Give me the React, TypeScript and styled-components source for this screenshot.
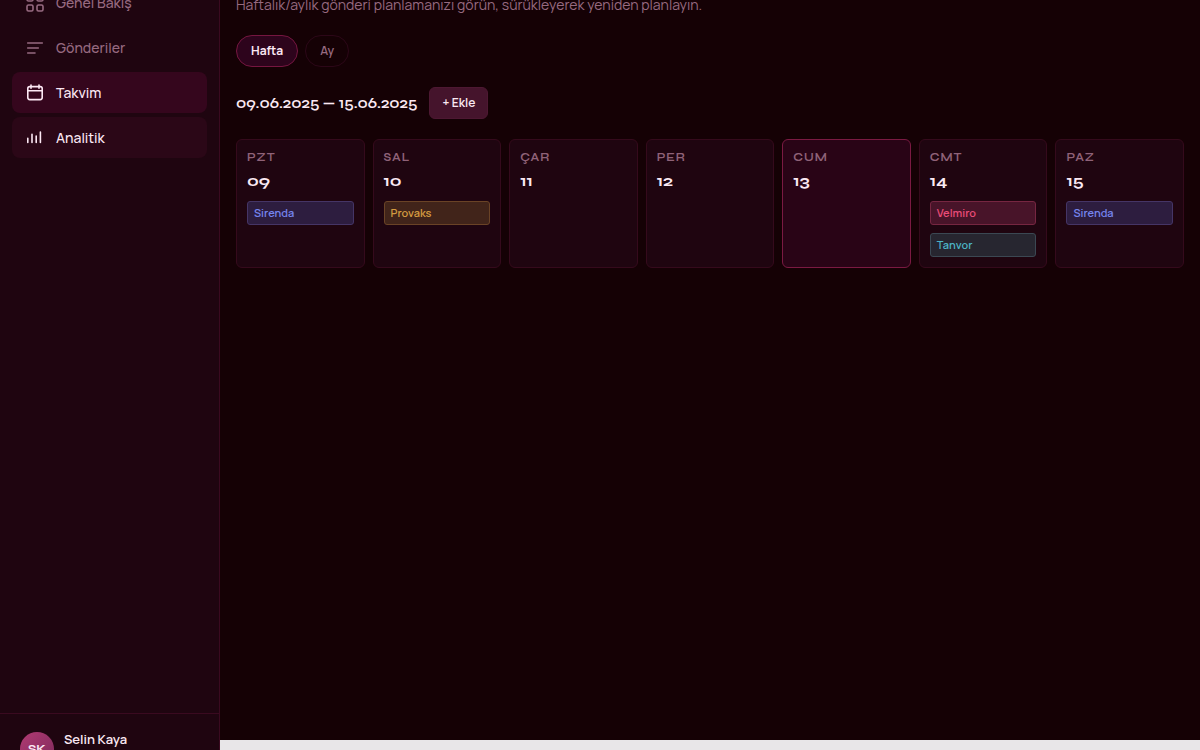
import React from "react";
import styled, { createGlobalStyle, css } from "styled-components";

const GlobalStyle = createGlobalStyle`
  *, *::before, *::after { box-sizing: border-box; }
  html, body { margin: 0; height: 100%; overflow: hidden; background: #e8e6e8; }
  body { font-family: Manrope, Inter, sans-serif; font-size: 14px; line-height: 20px; color: #fbe9f3; }
  button, a { font: inherit; color: inherit; }
`;

const display = css`font-family: Syne, "DejaVu Sans", sans-serif;`;

const Shell = styled.div`
  display: flex;
  height: 100vh;
  overflow: hidden;
`;

const Sidebar = styled.aside`
  display: flex;
  flex-direction: column;
  flex: 0 0 220px;
  background: #1f0510;
  border-right: 1px solid #3a0a20;
`;

const Nav = styled.nav`
  display: flex;
  flex-direction: column;
  flex: 1;
  gap: 4px;
  margin-top: -18px;
  padding: 0 12px;
`;

const NavLink = styled.a<{ $state?: "active" | "hover" }>`
  display: flex;
  flex-shrink: 0;
  align-items: center;
  gap: 12px;
  height: 41px;
  padding: 0 14px;
  border-radius: 8px;
  text-decoration: none;
  font-weight: 500;
  color: ${(p) => (p.$state ? "#fce8f4" : "#976a80")};
  background: ${(p) => (p.$state === "active" ? "#35061d" : p.$state === "hover" ? "#2b0717" : "transparent")};
`;

const NavIcon = styled.svg`
  width: 18px;
  height: 18px;
  flex-shrink: 0;
  fill: none;
  stroke: currentColor;
  stroke-width: 1.6;
  stroke-linecap: round;
  stroke-linejoin: round;
`;

const Account = styled.footer`
  display: flex;
  gap: 10px;
  height: 37px;
  flex-shrink: 0;
  padding: 18px 20px 0;
  border-top: 1px solid #3a0a20;
  overflow: hidden;
`;

const Avatar = styled.span`
  ${display}
  display: grid;
  place-items: center;
  flex-shrink: 0;
  width: 34px;
  height: 34px;
  border-radius: 50%;
  background: linear-gradient(135deg, #b03a72, #7d2a5c);
  font-size: 12px;
  font-weight: 700;
`;

const AccountName = styled.span`
  line-height: 14px;
  font-size: 13px;
  font-weight: 600;
`;

const Main = styled.main`
  display: flex;
  flex-direction: column;
  flex: 1;
  min-width: 0;
  margin-bottom: 10px;
  padding: 0 16px;
  background: #150105;
`;

const Intro = styled.p`
  margin: -5px 0 20px;
  font-weight: 400;
  color: #976a80;
`;

const Tabs = styled.div`
  display: flex;
  gap: 7px;
  margin-bottom: 20px;
`;

const Tab = styled.button<{ $active?: boolean }>`
  height: 32px;
  padding: 0 14px;
  border: 1px solid ${(p) => (p.$active ? "#751640" : "#2c0718")};
  border-radius: 16px;
  background: ${(p) => (p.$active ? "#2d041c" : "transparent")};
  color: ${(p) => (p.$active ? "#fce8f4" : "#976a80")};
  font-size: 12px;
  font-weight: ${(p) => (p.$active ? 700 : 600)};
`;

const WeekBar = styled.div`
  display: flex;
  align-items: center;
  gap: 12px;
  margin-bottom: 20px;
`;

const WeekRange = styled.h2`
  ${display}
  margin: 0;
  font-size: 15px;
  font-weight: 600;
`;

const AddButton = styled.button`
  height: 32px;
  padding: 0 12px;
  border: 1px solid #4d1832;
  border-radius: 6px;
  background: #45142c;
  font-size: 12px;
  font-weight: 600;
`;

const Week = styled.section`
  display: grid;
  grid-template-columns: repeat(7, minmax(0, 1fr));
  gap: 8px;
`;

const Day = styled.article<{ $today?: boolean }>`
  display: flex;
  flex-direction: column;
  min-height: 129px;
  padding: 10px;
  border: 1px solid ${(p) => (p.$today ? "#7a1a42" : "#350a1c")};
  border-radius: 6px;
  background: ${(p) => (p.$today ? "#290416" : "#1f0510")};
`;

const DayName = styled.span`
  ${display}
  font-size: 11px;
  font-weight: 700;
  line-height: 16px;
  letter-spacing: 1px;
  color: #8f6278;
`;

const DayNumber = styled.strong`
  ${display}
  margin: 5px 0 10px;
  font-size: 16px;
  line-height: 20px;
`;

const Posts = styled.div`
  display: flex;
  flex-direction: column;
  gap: 8px;
`;

const tones = {
  blue: { text: "#7584ed", fill: "#2d1d3f", line: "#453566" },
  amber: { text: "#d39a40", fill: "#41241a", line: "#6a4326" },
  rose: { text: "#e94c78", fill: "#481429", line: "#762641" },
  teal: { text: "#4cb3c4", fill: "#272630", line: "#3b4853" },
};

const Post = styled.div<{ $tone: keyof typeof tones }>`
  height: 24px;
  padding: 0 6px;
  border: 1px solid ${(p) => tones[p.$tone].line};
  border-radius: 3px;
  background: ${(p) => tones[p.$tone].fill};
  color: ${(p) => tones[p.$tone].text};
  font-size: 11px;
  font-weight: 600;
  line-height: 22px;
`;

type Entry = { name: string; tone: keyof typeof tones };

const days: { name: string; date: string; today?: boolean; posts: Entry[] }[] = [
  { name: "PZT", date: "09", posts: [{ name: "Sirenda", tone: "blue" }] },
  { name: "SAL", date: "10", posts: [{ name: "Provaks", tone: "amber" }] },
  { name: "ÇAR", date: "11", posts: [] },
  { name: "PER", date: "12", posts: [] },
  { name: "CUM", date: "13", today: true, posts: [] },
  { name: "CMT", date: "14", posts: [{ name: "Velmiro", tone: "rose" }, { name: "Tanvor", tone: "teal" }] },
  { name: "PAZ", date: "15", posts: [{ name: "Sirenda", tone: "blue" }] },
];

export default function App() {
  return (
    <>
      <GlobalStyle />
      <Shell>
        <Sidebar>
          <Nav>
            <NavLink href="#genel">
              <NavIcon viewBox="0 0 18 18" aria-hidden="true">
                <rect x="1" y="1" width="6" height="6" rx="1.5" />
                <rect x="11" y="1" width="6" height="6" rx="1.5" />
                <rect x="1" y="11" width="6" height="6" rx="1.5" />
                <rect x="11" y="11" width="6" height="6" rx="1.5" />
              </NavIcon>
              Genel Bakış
            </NavLink>
            <NavLink href="#gonderiler">
              <NavIcon viewBox="0 0 18 18" aria-hidden="true">
                <path d="M1.7 4h14.6M1.7 9h10.6M1.7 14h7.3" />
              </NavIcon>
              Gönderiler
            </NavLink>
            <NavLink href="#takvim" $state="active" aria-current="page">
              <NavIcon viewBox="0 0 18 18" aria-hidden="true">
                <rect x="1.8" y="2.6" width="14.4" height="13" rx="2" />
                <path d="M1.8 6.8h14.4M5 1v3.2M13 1v3.2" />
              </NavIcon>
              Takvim
            </NavLink>
            <NavLink href="#analitik" $state="hover">
              <NavIcon viewBox="0 0 18 18" aria-hidden="true">
                <path d="M1.8 9.4v4M6 5.2v8.2M10.2 7v6.4M14.4 3v10.4" />
              </NavIcon>
              Analitik
            </NavLink>
          </Nav>
          <Account>
            <Avatar>SK</Avatar>
            <AccountName>Selin Kaya</AccountName>
          </Account>
        </Sidebar>
        <Main>
          <Intro>Haftalık/aylık gönderi planlamanızı görün, sürükleyerek yeniden planlayın.</Intro>
          <Tabs>
            <Tab type="button" $active aria-pressed="true">Hafta</Tab>
            <Tab type="button" aria-pressed="false">Ay</Tab>
          </Tabs>
          <WeekBar>
            <WeekRange>09.06.2025 — 15.06.2025</WeekRange>
            <AddButton type="button">+ Ekle</AddButton>
          </WeekBar>
          <Week>
            {days.map((day) => (
              <Day key={day.date} $today={day.today}>
                <DayName>{day.name}</DayName>
                <DayNumber>{day.date}</DayNumber>
                <Posts>
                  {day.posts.map((post) => (
                    <Post key={post.name} $tone={post.tone}>{post.name}</Post>
                  ))}
                </Posts>
              </Day>
            ))}
          </Week>
        </Main>
      </Shell>
    </>
  );
}
